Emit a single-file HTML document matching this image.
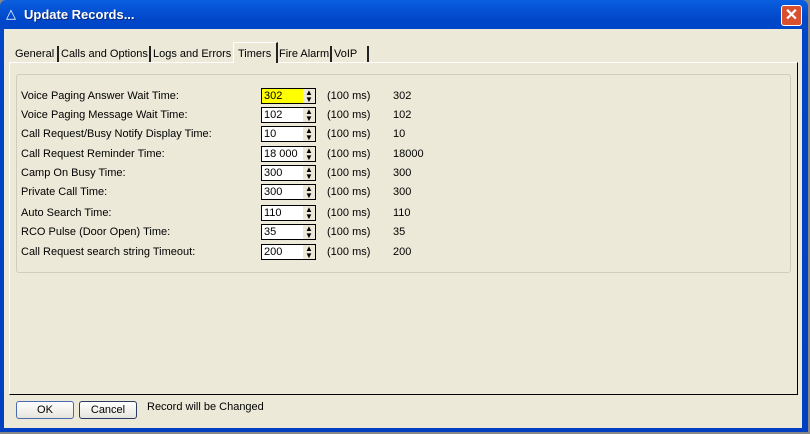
<!DOCTYPE html><html><head><style>
body{margin:0;width:810px;height:434px;overflow:hidden;background:#888;font-family:"Liberation Sans",sans-serif;font-size:11px;}
.win{position:absolute;left:0;top:0;width:808px;height:432px;background:linear-gradient(#0a5fe0,#0046c8 20px,#0040c0);border-radius:6px 6px 0 0;}
.title{position:absolute;left:24px;top:7px;color:#fff;font-weight:bold;font-size:13px;text-shadow:1px 1px #0a2a80;}
.client{position:absolute;left:4px;top:29px;width:798px;height:399px;background:#ECE9D8;}
.close{position:absolute;left:781px;top:5px;width:19px;height:19px;background:#d9502e;border:1px solid #fff;border-radius:3px;color:#fff;font-size:16px;font-weight:bold;text-align:center;line-height:19px;}
.a{position:absolute;white-space:nowrap;}
.tab{position:absolute;top:46px;height:17px;border-right:2px solid #222;font-size:11px;line-height:17px;padding-left:3px;white-space:nowrap;}
.panel{position:absolute;left:9px;top:62px;width:787px;height:331px;border-left:1px solid #fff;border-top:1px solid #fff;border-right:1px solid #000;border-bottom:1px solid #000;}
.grp{position:absolute;left:16px;top:74px;width:773px;height:197px;border:1px solid #d0cdbd;border-radius:3px;}
.in{position:absolute;left:261px;width:40px;height:14px;border:1px solid #000;background:#fff;font-size:11px;line-height:15px;padding-left:2px;}
.sp{position:absolute;left:303px;width:12px;height:14px;border:1px solid #000;border-left:none;background:#ECE9D8;font-size:8px;line-height:7px;text-align:center;overflow:hidden;}
.btn{position:absolute;top:401px;height:16px;border:1px solid #2a3a60;border-radius:3px;background:linear-gradient(#fff,#e6e4dc);text-align:center;line-height:17px;font-size:11px;}
.r .a{margin-top:2px}
</style></head><body>
<div class="win">
<div class="a" style="left:6px;top:6px;color:#fff;font-size:13px">&#9651;</div>
<div class="title">Update Records...</div>
<div class="close">✕</div>
<div class="client"></div>
</div>
<div class="tab" style="left:12px;width:42px">General</div>
<div class="tab" style="left:58px;width:88px">Calls and Options</div>
<div class="tab" style="left:150px;width:80px">Logs and Errors</div>
<div style="position:absolute;left:233px;top:42px;width:38px;height:20px;background:#ECE9D8;border-top:1px solid #fff;border-left:1px solid #fff;border-right:2px solid #222;font-size:11px;line-height:22px;padding-left:4px;z-index:2;white-space:nowrap">Timers</div>
<div class="tab" style="left:276px;width:51px">Fire Alarm</div>
<div class="tab" style="left:331px;width:33px">VoIP</div>
<div class="panel"></div>
<div class="grp"></div>
<div class="r">
<div class="a" style="left:21px;top:88px">Voice Paging Answer Wait Time:</div><div class="in" style="top:88px;background:#ff0">302</div><div class="sp" style="top:88px">▲<br>▼</div><div class="a" style="left:327px;top:88px">(100 ms)</div><div class="a" style="left:393px;top:88px">302</div>
<div class="a" style="left:21px;top:107px">Voice Paging Message Wait Time:</div><div class="in" style="top:107px">102</div><div class="sp" style="top:107px">▲<br>▼</div><div class="a" style="left:327px;top:107px">(100 ms)</div><div class="a" style="left:393px;top:107px">102</div>
<div class="a" style="left:21px;top:126px">Call Request/Busy Notify Display Time:</div><div class="in" style="top:126px">10</div><div class="sp" style="top:126px">▲<br>▼</div><div class="a" style="left:327px;top:126px">(100 ms)</div><div class="a" style="left:393px;top:126px">10</div>
<div class="a" style="left:21px;top:146px">Call Request Reminder Time:</div><div class="in" style="top:146px">18 000</div><div class="sp" style="top:146px">▲<br>▼</div><div class="a" style="left:327px;top:146px">(100 ms)</div><div class="a" style="left:393px;top:146px">18000</div>
<div class="a" style="left:21px;top:165px">Camp On Busy Time:</div><div class="in" style="top:165px">300</div><div class="sp" style="top:165px">▲<br>▼</div><div class="a" style="left:327px;top:165px">(100 ms)</div><div class="a" style="left:393px;top:165px">300</div>
<div class="a" style="left:21px;top:184px">Private Call Time:</div><div class="in" style="top:184px">300</div><div class="sp" style="top:184px">▲<br>▼</div><div class="a" style="left:327px;top:184px">(100 ms)</div><div class="a" style="left:393px;top:184px">300</div>
<div class="a" style="left:21px;top:205px">Auto Search Time:</div><div class="in" style="top:205px">110</div><div class="sp" style="top:205px">▲<br>▼</div><div class="a" style="left:327px;top:205px">(100 ms)</div><div class="a" style="left:393px;top:205px">110</div>
<div class="a" style="left:21px;top:224px">RCO Pulse (Door Open) Time:</div><div class="in" style="top:224px">35</div><div class="sp" style="top:224px">▲<br>▼</div><div class="a" style="left:327px;top:224px">(100 ms)</div><div class="a" style="left:393px;top:224px">35</div>
<div class="a" style="left:21px;top:244px">Call Request search string Timeout:</div><div class="in" style="top:244px">200</div><div class="sp" style="top:244px">▲<br>▼</div><div class="a" style="left:327px;top:244px">(100 ms)</div><div class="a" style="left:393px;top:244px">200</div>
</div>
<div class="btn" style="left:16px;width:56px;border-color:#4a6ab0">OK</div>
<div class="btn" style="left:79px;width:56px">Cancel</div>
<div class="a" style="left:147px;top:401px;font-size:11px">Record will be Changed</div>
</body></html>
